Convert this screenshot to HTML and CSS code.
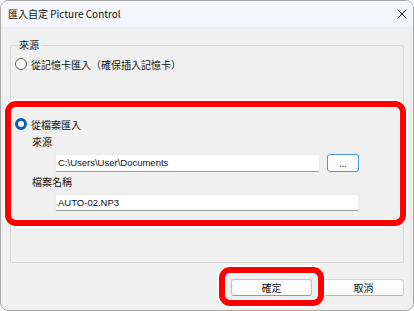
FILE: index.html
```html
<!DOCTYPE html>
<html lang="zh-Hant">

<head>
    <meta charset="UTF-8">
    <title>匯入自定 Picture Control</title>
    <link rel="stylesheet" href="styles.css">
</head>

<body>
    <div class="window">
        <div class="titlebar">
            <span class="title">匯入自定 Picture Control</span>
            <svg class="close-icon" viewBox="0 0 10 10" width="10" height="10">
                <path d="M0.5 0.5L9.5 9.5M9.5 0.5L0.5 9.5" stroke="#1b1b1b" stroke-width="1" fill="none"/>
            </svg>
        </div>
        <div class="content">
            <fieldset class="group">
                <legend>來源</legend>
                <label class="radio-row">
                    <span class="radio"></span>
                    <span>從記憶卡匯入（確保插入記憶卡）</span>
                </label>
                <div class="file-section">
                    <label class="radio-row">
                        <span class="radio checked"></span>
                        <span>從檔案匯入</span>
                    </label>
                    <div class="field-label">來源</div>
                    <div class="field-row">
                        <div class="text-input path-input">C:\Users\User\Documents</div>
                        <button class="browse-btn">...</button>
                    </div>
                    <div class="field-label">檔案名稱</div>
                    <div class="field-row">
                        <div class="text-input name-input">AUTO-02.NP3</div>
                    </div>
                    <div class="highlight section-highlight"></div>
                </div>
            </fieldset>
            <div class="button-row">
                <div class="btn-wrap">
                    <button class="btn default">確定</button>
                    <div class="highlight ok-highlight"></div>
                </div>
                <button class="btn">取消</button>
            </div>
        </div>
    </div>
</body>

</html>
```

FILE: styles.css
```css
body,
html {
    margin: 0;
    padding: 0;
    background-color: white;
    font-family: "Noto Sans CJK TC", "Noto Sans", sans-serif;
    font-size: 10px;
    color: #111;
}

.window {
    width: 414px;
    height: 311px;
    box-sizing: border-box;
    border: 1px solid #a8a8a8;
    border-radius: 8px;
    overflow: hidden;
    background-color: #f0f0f0;
    display: flex;
    flex-direction: column;
}

.titlebar {
    height: 26px;
    background-color: #f4f6fb;
    display: flex;
    align-items: center;
    justify-content: space-between;
    padding: 0 6px 0 7px;
    flex-shrink: 0;
}

.title {
    line-height: 14px;
    font-size: 10px;
}

.content {
    padding: 0 9px;
    display: flex;
    flex-direction: column;
}

.group {
    margin: 11px 0 0 0;
    padding: 0 0 51px 4px;
    border: 1px solid #d9d9d9;
    border-radius: 2px;
    min-width: 0;
}

.group legend {
    padding: 0 2px;
    margin-left: 2px;
    line-height: 14px;
}

.radio-row {
    display: flex;
    align-items: center;
    height: 14px;
    margin-top: 5px;
    gap: 4px;
}

.radio {
    width: 12px;
    height: 12px;
    box-sizing: border-box;
    border: 1px solid #5f5f5f;
    border-radius: 50%;
    background-color: #f8f8f8;
}

.radio.checked {
    border: 3.5px solid #0a5fb4;
    background-color: white;
}

.file-section {
    position: relative;
    margin-top: 46px;
}

.file-section .radio-row {
    margin-top: 0;
}

.field-label {
    line-height: 14px;
    margin: 4px 0 0 17px;
}

.field-row {
    display: flex;
    gap: 7px;
    margin: 5px 0 0 40px;
}

.field-row + .field-label {
    margin-top: 3px;
}

.text-input {
    height: 18px;
    box-sizing: border-box;
    background-color: white;
    border: 1px solid #ececec;
    border-bottom: 1px solid #9c9c9c;
    border-radius: 2px;
    padding: 0 2px;
    line-height: 16px;
    font-family: "Liberation Sans", Arial, sans-serif;
    font-size: 9.5px;
}

.path-input {
    width: 265px;
}

.name-input {
    width: 304px;
    height: 17px;
}

.browse-btn {
    width: 32px;
    height: 18px;
    box-sizing: border-box;
    border: 1px solid #4f98dc;
    border-radius: 3px;
    background-color: #fbfbfb;
    color: #444;
    font-family: inherit;
    font-size: 9px;
    line-height: 10px;
    padding: 2px 0 0 0;
}

.highlight {
    position: absolute;
    border: 6px solid #ff0000;
    border-radius: 11px;
    box-shadow: 0 0 0 1.5px white, inset 0 0 0 1px white;
    pointer-events: none;
}

.section-highlight {
    top: -16px;
    left: -10px;
    right: -3px;
    bottom: -15px;
}

.button-row {
    display: flex;
    justify-content: flex-end;
    gap: 11px;
    margin-top: 16px;
}

.btn-wrap {
    position: relative;
    display: flex;
}

.btn {
    width: 81px;
    height: 17px;
    box-sizing: border-box;
    background-color: #fdfdfd;
    border: 1px solid #d4d4d4;
    border-bottom-color: #b5b5b5;
    border-radius: 3px;
    font-family: inherit;
    font-size: 10px;
    line-height: 13px;
    padding: 0;
    color: #111;
}

.btn.default {
    border-color: #c2c2c2;
    border-bottom-color: #9a9a9a;
}

.ok-highlight {
    top: -12px;
    left: -12px;
    right: -12px;
    bottom: -10px;
}
```
